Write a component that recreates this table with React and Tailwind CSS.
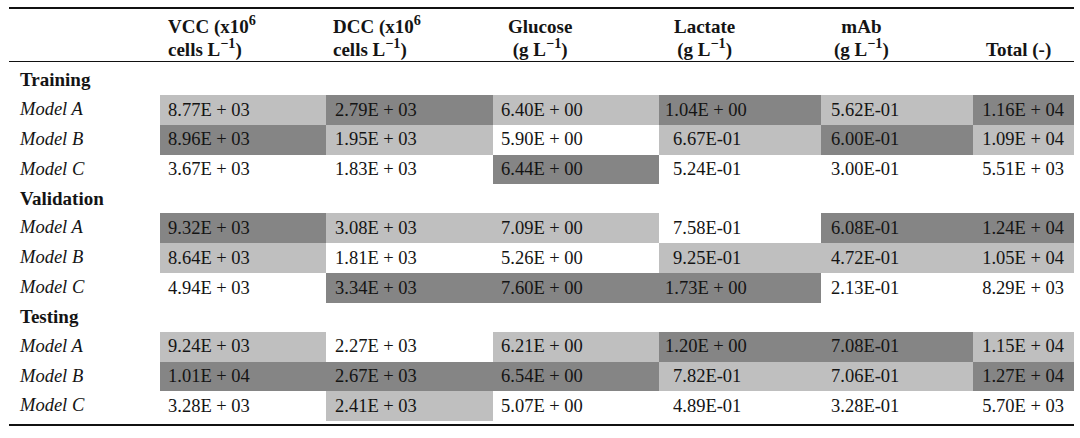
const L = "bg-[#bfbfbf]";
const D = "bg-[#858585]";
const N = "";

const sections = [
  {
    name: "Training",
    first: true,
    rows: [
      { model: "Model A", values: ["8.77E + 03", "2.79E + 03", "6.40E + 00", "1.04E + 00", "5.62E-01", "1.16E + 04"], shades: [L, D, L, D, L, D] },
      { model: "Model B", values: ["8.96E + 03", "1.95E + 03", "5.90E + 00", "6.67E-01", "6.00E-01", "1.09E + 04"], shades: [D, L, N, L, D, L] },
      { model: "Model C", values: ["3.67E + 03", "1.83E + 03", "6.44E + 00", "5.24E-01", "3.00E-01", "5.51E + 03"], shades: [N, N, D, N, N, N] },
    ],
  },
  {
    name: "Validation",
    rows: [
      { model: "Model A", values: ["9.32E + 03", "3.08E + 03", "7.09E + 00", "7.58E-01", "6.08E-01", "1.24E + 04"], shades: [D, L, L, N, D, D] },
      { model: "Model B", values: ["8.64E + 03", "1.81E + 03", "5.26E + 00", "9.25E-01", "4.72E-01", "1.05E + 04"], shades: [L, N, N, L, L, L] },
      { model: "Model C", values: ["4.94E + 03", "3.34E + 03", "7.60E + 00", "1.73E + 00", "2.13E-01", "8.29E + 03"], shades: [N, D, D, D, N, N] },
    ],
  },
  {
    name: "Testing",
    rows: [
      { model: "Model A", values: ["9.24E + 03", "2.27E + 03", "6.21E + 00", "1.20E + 00", "7.08E-01", "1.15E + 04"], shades: [L, N, L, D, D, L] },
      { model: "Model B", values: ["1.01E + 04", "2.67E + 03", "6.54E + 00", "7.82E-01", "7.06E-01", "1.27E + 04"], shades: [D, D, D, L, L, D] },
      { model: "Model C", values: ["3.28E + 03", "2.41E + 03", "5.07E + 00", "4.89E-01", "3.28E-01", "5.70E + 03"], shades: [N, L, N, N, N, N] },
    ],
  },
];

// left padding per column, lactate small values sit a bit further in
const pads = ["pl-2", "pl-[9px]", "pl-2", "pl-[6px]", "pl-[10px]", "pr-[10px] text-right"];

function Unit() {
  return (
    <>
      (g L<sup>−1</sup>)
    </>
  );
}

export default function App() {
  return (
    <div className="min-h-screen bg-white pt-[7px] font-['Liberation_Serif',serif] text-[18.5px] text-[#141414]">
      <div className="ml-[9px] w-[1065px] border-y-2 border-[#111] pb-[3px]">
        <table className="w-full table-fixed border-collapse">
          <colgroup>
            <col className="w-[151px]" />
            <col className="w-[166px]" />
            <col className="w-[167px]" />
            <col className="w-[166px]" />
            <col className="w-[162px]" />
            <col className="w-[152px]" />
            <col className="w-[101px]" />
          </colgroup>
          <thead>
            <tr className="h-[52px] border-b-[1.5px] border-[#111] align-bottom text-[19px] font-bold leading-[23px]">
              <th></th>
              <th className="pl-2 text-left font-bold">
                VCC (x10<sup>6</sup>
                <br />
                cells L<sup>−1</sup>)
              </th>
              <th className="pl-[7px] text-left font-bold">
                DCC (x10<sup>6</sup>
                <br />
                cells L<sup>−1</sup>)
              </th>
              <th className="pl-[15px] text-left font-bold">
                <span className="inline-block text-center">
                  Glucose
                  <br />
                  <Unit />
                </span>
              </th>
              <th className="pl-[15px] text-left font-bold">
                <span className="inline-block text-center">
                  Lactate
                  <br />
                  <Unit />
                </span>
              </th>
              <th className="pl-[13px] text-left font-bold">
                <span className="inline-block text-center">
                  mAb
                  <br />
                  <Unit />
                </span>
              </th>
              <th className="pl-[13px] text-left font-bold">Total (-)</th>
            </tr>
          </thead>
          <tbody>
            {sections.map((section) => (
              <SectionRows key={section.name} section={section} />
            ))}
          </tbody>
        </table>
      </div>
    </div>
  );
}

function SectionRows({ section }) {
  return (
    <>
      <tr className={section.first ? "h-[34px]" : "h-[29px]"}>
        <td colSpan={7} className={"pl-[11px] text-[19px] font-bold " + (section.first ? "pt-[3px]" : "")}>
          {section.name}
        </td>
      </tr>
      {section.rows.map((row) => (
        <tr key={row.model} className="h-[29.8px]">
          <td className="pl-[11px] italic">{row.model}</td>
          {row.values.map((value, i) => (
            <td
              key={i}
              className={
                row.shades[i] +
                " " +
                (i === 3 && value.includes("E-") ? "pl-[14px]" : pads[i]) +
                " whitespace-nowrap leading-none"
              }
            >
              {value}
            </td>
          ))}
        </tr>
      ))}
    </>
  );
}
